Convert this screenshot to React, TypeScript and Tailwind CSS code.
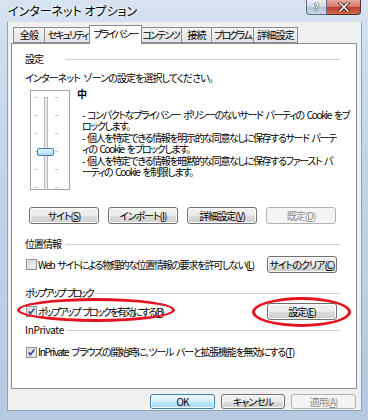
import React from 'react';
import clsx from 'clsx';

const jp = "font-['Noto_Sans_CJK_JP','Noto_Sans',sans-serif] [font-feature-settings:'palt']";

function U({ children }: { children: React.ReactNode }) {
  return <span className="underline underline-offset-[1px] decoration-[1px]">{children}</span>;
}

function Button({
  children,
  className,
  disabled = false,
  primary = false,
}: {
  children: React.ReactNode;
  className?: string;
  disabled?: boolean;
  primary?: boolean;
}) {
  return (
    <div
      className={clsx(
        'flex shrink-0 items-center justify-center rounded-[3px] border text-[10px] leading-none tracking-[-1px] whitespace-nowrap',
        disabled
          ? 'border-[#adb2b5] bg-[#f4f4f4] text-[#8d8d8d]'
          : primary
            ? 'border-[#3c7fb1] bg-[linear-gradient(#eaf6fd_0%,#d9f0fc_50%,#bee6fd_50%,#a7d9f5_100%)] text-black shadow-[inset_0_0_0_1px_#f4fbff]'
            : 'border-[#707070] bg-[linear-gradient(#f2f2f2_0%,#ebebeb_50%,#dddddd_50%,#cfcfcf_100%)] text-black shadow-[inset_0_0_0_1px_#fbfbfb]',
        className,
      )}
    >
      {children}
    </div>
  );
}

function CheckBox({ checked }: { checked: boolean }) {
  return (
    <svg width="11" height="11" viewBox="0 0 11 11" className="shrink-0">
      <defs>
        <linearGradient id="cbg" x1="0" y1="0" x2="1" y2="1">
          <stop offset="0" stopColor="#d9d9d9" />
          <stop offset="1" stopColor="#f7f7f7" />
        </linearGradient>
      </defs>
      <rect x="0.5" y="0.5" width="10" height="10" fill="#f6f6f6" stroke="#8e8f8f" />
      <rect x="2" y="2" width="7" height="7" fill="url(#cbg)" stroke="#c8c8c8" strokeWidth="0.6" />
      {checked && (
        <path d="M2.6 5.4 L4.5 7.6 L8.4 2.6" fill="none" stroke="#3d4f8c" strokeWidth="1.7" />
      )}
    </svg>
  );
}

function Header({ label, className }: { label: string; className: string }) {
  return (
    <div className="flex h-[14px] items-center text-[10px] leading-none">
      <span className={clsx('whitespace-nowrap [word-spacing:2px]', className)}>{label}</span>
      <div className="ml-[3px] h-px flex-1 bg-[#c9cfd4]" />
    </div>
  );
}

function Trackbar() {
  const ticks = [8, 26, 44, 62, 80, 98];
  return (
    <svg width="40" height="100" viewBox="0 0 40 100">
      <rect x="0.5" y="0.5" width="39" height="99" fill="none" stroke="#444" strokeDasharray="1 1" />
      {ticks.map((y) => (
        <g key={y}>
          <line x1="5" y1={y - 0.5} x2="8" y2={y - 0.5} stroke="#c6c6c6" />
          <line x1="25" y1={y - 0.5} x2="28" y2={y - 0.5} stroke="#c6c6c6" />
        </g>
      ))}
      <rect x="14.5" y="7.5" width="3" height="92" fill="#e8ebec" stroke="#b5b9bc" />
      <defs>
        <linearGradient id="thumb" x1="0" y1="0" x2="0" y2="1">
          <stop offset="0" stopColor="#eaf6fd" />
          <stop offset="1" stopColor="#a9d8f3" />
        </linearGradient>
      </defs>
      <rect x="7.5" y="58.5" width="16" height="7" rx="1.5" fill="url(#thumb)" stroke="#3c7fb1" />
    </svg>
  );
}

function Tab({ label, className, selected = false }: { label: string; className: string; selected?: boolean }) {
  return (
    <div
      className={clsx(
        'flex shrink-0 items-center justify-center border border-[#898c95] text-[10px] leading-none whitespace-nowrap',
        selected
          ? 'relative z-10 -mx-[2px] h-[19px] -mb-px border-b-0 bg-white pb-[2px]'
          : 'h-[16px] -ml-px bg-[linear-gradient(#f3f3f3,#e3e3e3)] first:ml-0',
        className,
      )}
    >
      {label}
    </div>
  );
}

export default function App() {
  return (
    <div
      className={clsx(
        'relative h-[420px] w-[368px] overflow-hidden bg-[linear-gradient(180deg,#d5e2f0_0%,#c2d4e8_40%,#b5c9e0_100%)] text-black',
        jp,
      )}
    >
      {/* title bar */}
      <div className="flex h-[22px] items-start">
        <div className="ml-[8px] mt-[4px] text-[12px] leading-[14px] whitespace-nowrap [text-shadow:0_0_6px_#ffffff,0_0_3px_#ffffff]">
          インターネット オプション
        </div>
        <div className="ml-auto mr-[7px] flex h-[15px]">
          <div className="flex w-[21px] items-center justify-center rounded-bl-[4px] border border-t-0 border-[#5d6f88] bg-[linear-gradient(#e9eff6_0%,#cdd9e6_50%,#b3c4d7_51%,#c9d8e7_100%)] text-[10px] font-bold leading-none text-white [text-shadow:0_0_1px_#26354a,0_0_1px_#26354a,0_0_1px_#26354a]">
            ?
          </div>
          <div className="flex w-[34px] items-center justify-center rounded-br-[4px] border border-l-0 border-t-0 border-[#5d2a26] bg-[linear-gradient(#e8a89e_0%,#d4776b_50%,#c0392b_51%,#d26a4c_100%)]">
            <svg width="12" height="10" viewBox="0 0 12 10">
              <path d="M2 1 L10 9 M10 1 L2 9" stroke="#3a1a18" strokeWidth="3.2" strokeLinecap="square" />
              <path d="M2 1 L10 9 M10 1 L2 9" stroke="#ffffff" strokeWidth="1.6" strokeLinecap="square" />
            </svg>
          </div>
        </div>
      </div>

      {/* client area */}
      <div className="ml-[7px] flex h-[389px] w-[355px] flex-col border-x border-b border-[#8da2bb] bg-[#f0f0f0] pl-[3px] pr-[4px] pt-[3px]">
        {/* tabs */}
        <div className="flex h-[18px] items-end pl-[2px]">
          <Tab label="全般" className="w-[32px] tracking-[-0.8px]" />
          <Tab label="セキュリティ" className="w-[47px] tracking-[-2px]" />
          <Tab label="プライバシー" className="w-[53px] tracking-[-1.8px]" selected />
          <Tab label="コンテンツ" className="w-[43px] tracking-[-1.8px]" />
          <Tab label="接続" className="w-[31px] tracking-[-0.8px]" />
          <Tab label="プログラム" className="w-[43px] tracking-[-1.8px]" />
          <Tab label="詳細設定" className="w-[45px] tracking-[-0.8px]" />
        </div>

        {/* tab panel */}
        <div className="flex h-[346px] w-[346px] flex-col border border-[#898c95] bg-white pl-[13px] pr-[16px]">
          <div className="mt-[8px]">
            <Header label="設定" className="min-w-[38px] tracking-[-1px]" />
          </div>
          <div className="mt-[5px] flex h-[14px] items-center text-[10px] leading-none tracking-[-0.9px] whitespace-nowrap [word-spacing:2px]">
            インターネット ゾーンの設定を選択してください。
          </div>

          <div className="mt-[5px] flex h-[100px]">
            <div className="ml-[5px]">
              <Trackbar />
            </div>
            <div className="-mt-[2px] ml-[7px] flex flex-col text-[10px] whitespace-nowrap">
              <div className="h-[12px] font-bold leading-[12px]">中</div>
              <div className="mt-[9px] pl-[5px] leading-[11.4px] tracking-[-1.35px] [word-spacing:2px]">
                <div>- コンパクトなプライバシー ポリシーのないサード パーティの Cookie をブ</div>
                <div>ロックします。</div>
                <div>- 個人を特定できる情報を明示的な同意なしに保存するサード パーテ</div>
                <div>ィの Cookie をブロックします。</div>
                <div>- 個人を特定できる情報を暗黙的な同意なしに保存するファースト パ</div>
                <div>ーティの Cookie を制限します。</div>
              </div>
            </div>
          </div>

          <div className="mt-[17px] flex h-[17px] gap-[9px] pl-[4px]">
            <Button className="w-[70px]">
              サイト(<U>S</U>)
            </Button>
            <Button className="w-[70px]">
              インポート(<U>I</U>)
            </Button>
            <Button className="w-[70px]">
              詳細設定(<U>V</U>)
            </Button>
            <Button className="w-[70px]" disabled>
              既定(<U>D</U>)
            </Button>
          </div>

          <div className="mt-[13px]">
            <Header label="位置情報" className="min-w-[38px] tracking-[-1px]" />
          </div>
          <div className="mt-[5px] flex h-[17px] items-center pr-[3px]">
            <div className="ml-[1px]">
              <CheckBox checked={false} />
            </div>
            <span className="ml-[1px] text-[10px] leading-none tracking-[-1.35px] whitespace-nowrap [word-spacing:2px]">
              Web サイトによる物理的な位置情報の要求を許可しない(<U>L</U>)
            </span>
            <Button className="ml-auto h-[17px] w-[70px]">
              サイトのクリア(<U>C</U>)
            </Button>
          </div>

          <div className="mt-[13px]">
            <Header label="ポップアップ ブロック" className="tracking-[-2.3px]" />
          </div>
          <div className="mt-[3px] flex h-[17px] items-center pr-[3px]">
            <div className="ml-[1px]">
              <CheckBox checked />
            </div>
            <span className="ml-[1px] text-[10px] leading-none tracking-[-1.9px] whitespace-nowrap [word-spacing:2px]">
              ポップアップ ブロックを有効にする(<U>B</U>)
            </span>
            <Button className="ml-auto h-[17px] w-[70px]">
              設定(<U>E</U>)
            </Button>
          </div>

          <div className="mt-[3px]">
            <Header label="InPrivate" className="tracking-[-0.3px]" />
          </div>
          <div className="mt-[8px] flex h-[14px] items-center">
            <div className="ml-[1px]">
              <CheckBox checked />
            </div>
            <span className="ml-[1px] text-[10px] leading-none tracking-[-1.25px] whitespace-nowrap [word-spacing:2px]">
              InPrivate ブラウズの開始時に、ツール バーと拡張機能を無効にする(<U>T</U>)
            </span>
          </div>
        </div>

        {/* dialog buttons */}
        <div className="mt-[5px] flex h-[15px] justify-end gap-[6px] pr-[1px]">
          <Button className="w-[65px]" primary>
            OK
          </Button>
          <Button className="w-[64px]">キャンセル</Button>
          <Button className="w-[65px]" disabled>
            適用(<U>A</U>)
          </Button>
        </div>
      </div>

      {/* red annotation ellipses */}
      <div className="absolute left-[17px] top-[298px] h-[24px] w-[158px] rounded-[50%] border-[3px] border-[#e3131f]" />
      <div className="absolute left-[252px] top-[297px] h-[30px] w-[99px] rounded-[50%] border-[3px] border-[#e3131f]" />
    </div>
  );
}
